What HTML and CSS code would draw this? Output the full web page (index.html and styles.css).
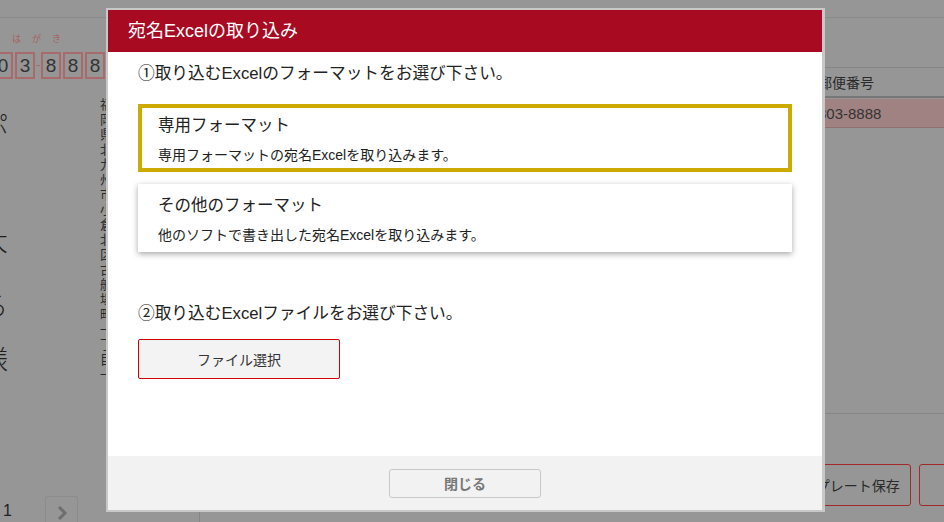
FILE: index.html
```html
<!DOCTYPE html>
<html lang="ja">
<head>
    <meta charset="UTF-8">
    <meta name="viewport" content="width=device-width, initial-scale=1.0">
    <title>宛名Excelの取り込み</title>
    <link rel="stylesheet" href="styles.css">
</head>
<body>
    <div class="page">
        <div class="topbar"></div>
        <div class="main">
            <div class="postcard-panel">
                <div class="postcard">
                    <div class="hagaki">はがき</div>
                    <div class="zip-boxes">
                        <span class="zip-box">8</span>
                        <span class="zip-box">0</span>
                        <span class="zip-box">3</span>
                        <span class="zip-dash"></span>
                        <span class="zip-box">8</span>
                        <span class="zip-box">8</span>
                        <span class="zip-box">8</span>
                        <span class="zip-box">8</span>
                    </div>
                    <div class="address-area">
                        <div class="name-col">
                            <span class="name-char c1">ぷ</span>
                            <span class="name-char c2">大</span>
                            <span class="name-char c3">る</span>
                            <span class="name-char c4">様</span>
                        </div>
                        <div class="addr-col">福岡県北九州市小倉北区古船場町一丁目一</div>
                    </div>
                </div>
                <div class="pager">
                    <span class="page-num">1</span>
                    <span class="page-next">
                        <svg width="12" height="14" viewBox="0 0 12 14"><path d="M3 1 L9 7 L3 13" fill="none" stroke="#6e6e6e" stroke-width="3"/></svg>
                    </span>
                </div>
            </div>
            <div class="list-panel">
                <div class="list-table">
                    <div class="list-head">
                        <span></span>
                        <span class="cell">郵便番号</span>
                    </div>
                    <div class="list-row selected">
                        <span></span>
                        <span class="cell">803-8888</span>
                    </div>
                </div>
                <div class="list-footer">
                    <button class="outline-btn">テンプレート保存</button>
                    <button class="outline-btn wide">保存</button>
                </div>
            </div>
        </div>
    </div>

    <div class="modal">
        <div class="modal-header">宛名Excelの取り込み</div>
        <div class="modal-body">
            <div class="step-title">①取り込むExcelのフォーマットをお選び下さい。</div>
            <div class="format-list">
                <div class="format-card active">
                    <div class="format-name">専用フォーマット</div>
                    <div class="format-desc">専用フォーマットの宛名Excelを取り込みます。</div>
                </div>
                <div class="format-card">
                    <div class="format-name">その他のフォーマット</div>
                    <div class="format-desc">他のソフトで書き出した宛名Excelを取り込みます。</div>
                </div>
            </div>
            <div class="step-title step2">②取り込むExcelファイルをお選び下さい。</div>
            <button class="file-btn">ファイル選択</button>
        </div>
        <div class="modal-footer">
            <button class="close-btn">閉じる</button>
        </div>
    </div>
</body>
</html>
```

FILE: styles.css
```css
* {
    margin: 0;
    padding: 0;
    box-sizing: border-box;
    font-family: 'Liberation Sans', 'Noto Sans CJK JP', sans-serif;
}

body {
    width: 944px;
    height: 522px;
    overflow: hidden;
    background-color: #969696;
    color: #222;
}

/* background page (already dimmed) */
.page {
    height: 522px;
    display: flex;
    flex-direction: column;
}

.topbar {
    height: 18px;
    border-bottom: 1px solid #8a8a8a;
}

.main {
    flex: 1;
    display: flex;
    min-height: 0;
}

.postcard-panel {
    width: 200px;
    display: flex;
    flex-direction: column;
}

.postcard {
    flex: 1;
    overflow: hidden;
    padding-top: 14px;
}

.hagaki {
    font-size: 9px;
    color: #a86060;
    letter-spacing: 11px;
    padding-left: 12px;
    line-height: 14px;
}

.zip-boxes {
    display: flex;
    gap: 2px;
    margin-top: 6px;
    margin-left: -29px;
}

.zip-box {
    width: 20px;
    height: 27px;
    flex: none;
    border: 2px solid #a86a6a;
    font-size: 19px;
    line-height: 23px;
    text-align: center;
    color: #333;
}

.zip-dash {
    width: 4px;
    height: 1px;
    margin: 13px -1px 0;
    flex: none;
    background-color: #a86a6a;
}

.address-area {
    display: flex;
    justify-content: space-between;
    width: 113px;
}

.name-col {
    display: flex;
    flex-direction: column;
    margin-left: -19px;
}

.name-char {
    font-family: 'Noto Sans CJK JP', sans-serif;
    font-size: 27px;
    line-height: 27px;
    font-weight: 300;
    color: #1e1e1e;
}

.c1 { margin-top: 30px; }
.c2 { margin-top: 90px; }
.c3 { margin-top: 38px; }
.c4 { margin-top: 27px; }

.addr-col {
    writing-mode: vertical-rl;
    white-space: nowrap;
    font-family: 'Noto Sans CJK JP', sans-serif;
    font-size: 13px;
    line-height: 14px;
    color: #2a2a2a;
    margin-top: 19px;
    letter-spacing: 2px;
}

.pager {
    height: 26px;
    display: flex;
    align-items: flex-end;
    border-right: 1px solid #858585;
    padding-left: 3px;
}

.page-num {
    font-size: 16px;
    line-height: 22px;
    color: #222;
    width: 42px;
}

.page-next {
    width: 33px;
    height: 26px;
    border: 1px solid #8c8c8c;
    border-bottom: none;
    border-radius: 3px 3px 0 0;
    display: flex;
    justify-content: center;
    align-items: center;
    padding-top: 6px;
}

.list-panel {
    flex: 1;
    display: flex;
    flex-direction: column;
    overflow: hidden;
}

.list-table {
    margin-top: 49px;
    height: 347px;
    border-top: 1px solid #858585;
    border-bottom: 1px solid #858585;
}

.list-head,
.list-row {
    display: grid;
    grid-template-columns: 618px 1fr;
}

.list-head {
    height: 30px;
    border-bottom: 2px solid #777;
    align-items: center;
    font-size: 14px;
    color: #2a2a2a;
}

.list-row {
    height: 29px;
    margin-top: 1px;
    align-items: center;
    font-size: 15px;
    color: #333;
}

.list-row.selected {
    background-color: #a08282;
    border-bottom: 1px solid #8f7070;
}

.list-footer {
    display: flex;
    justify-content: flex-end;
    gap: 8px;
    margin-top: 50px;
    margin-right: -70px;
}

.outline-btn {
    height: 42px;
    width: 134px;
    background-color: #969696;
    border: 1px solid #a02a2a;
    border-radius: 3px;
    font-size: 14px;
    color: #2a2a2a;
}

.outline-btn.wide {
    width: 95px;
}

/* dialog */
.modal {
    position: fixed;
    left: 106px;
    top: 8px;
    width: 719px;
    height: 504px;
    border: 2px solid #c8c8c8;
    border-right-width: 3px;
    background-color: #fff;
    display: flex;
    flex-direction: column;
}

.modal-header {
    height: 42px;
    flex: none;
    background-color: #a80a22;
    color: #fff;
    font-size: 18px;
    line-height: 42px;
    padding-left: 20px;
}

.modal-body {
    flex: 1;
    padding: 10px 30px 0;
}

.step-title {
    font-size: 16.7px;
    line-height: 24px;
    color: #222;
}

.format-list {
    display: flex;
    flex-direction: column;
    gap: 12px;
    margin-top: 18px;
}

.format-card {
    height: 68px;
    border: 4px solid #fff;
    padding: 7px 16px 0;
    background-color: #fff;
    box-shadow: 0 2px 6px rgba(0, 0, 0, 0.35);
    cursor: pointer;
}

.format-card.active {
    border-color: #ccaa00;
    box-shadow: none;
}

.format-name {
    font-size: 16.5px;
    line-height: 20px;
    color: #222;
}

.format-desc {
    font-size: 14px;
    line-height: 18px;
    margin-top: 11px;
    color: #222;
}

.step2 {
    margin-top: 50px;
}

.file-btn {
    display: block;
    width: 202px;
    height: 40px;
    margin-top: 13px;
    background-color: #f3f3f3;
    border: 1px solid #d40000;
    border-radius: 2px;
    font-size: 14px;
    color: #333;
    cursor: pointer;
}

.modal-footer {
    height: 54px;
    flex: none;
    background-color: #f2f2f2;
    display: flex;
    justify-content: center;
    align-items: center;
}

.close-btn {
    width: 152px;
    height: 29px;
    background-color: #f2f2f2;
    border: 1px solid #c8c8c8;
    border-radius: 3px;
    font-size: 14px;
    font-weight: bold;
    color: #777;
    cursor: pointer;
}
```
